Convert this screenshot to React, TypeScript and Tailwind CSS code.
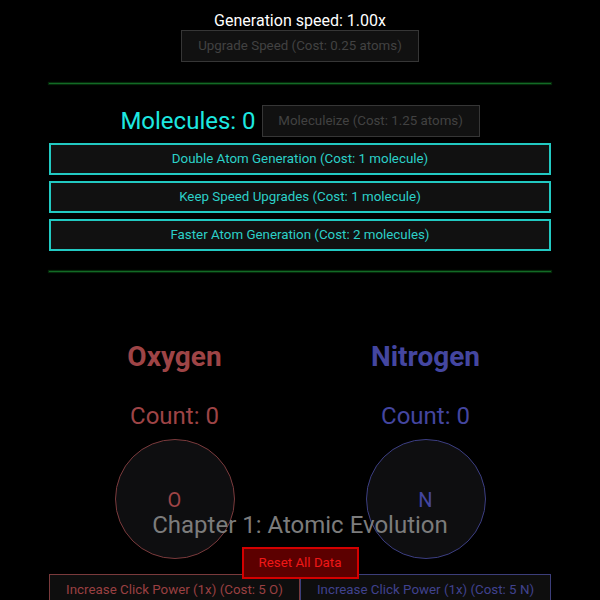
import React from 'react';

const upgrades = [
  'Double Atom Generation (Cost: 1 molecule)',
  'Keep Speed Upgrades (Cost: 1 molecule)',
  'Faster Atom Generation (Cost: 2 molecules)',
];

const elements = [
  {
    name: 'Oxygen',
    symbol: 'O',
    text: 'text-[#9e4446]',
    ring: 'border-[#7a3a3c]',
    btn: 'border-[#7a3a3c] text-[#9a4042]',
  },
  {
    name: 'Nitrogen',
    symbol: 'N',
    text: 'text-[#4446a0]',
    ring: 'border-[#3c3e82]',
    btn: 'border-[#3c3e7a] text-[#40428f]',
  },
];

const App: React.FC = () => {
  return (
    <div className="relative min-h-[600px] bg-black font-['Roboto',sans-serif] overflow-hidden">
      <div className="w-[502px] mx-auto flex flex-col">
        {/* Speed */}
        <div className="pt-[11px] text-center text-white text-[16px] leading-[19px]">
          Generation speed: 1.00x
        </div>
        <div className="flex justify-center">
          <button className="h-[32px] w-[238px] bg-[#111111] border border-[#363636] text-[#424242] text-[13.33px]">
            Upgrade Speed (Cost: 0.25 atoms)
          </button>
        </div>

        <div className="mt-[21px] h-px bg-[#126a26] shadow-[0_0_1px_1px_#062e0c]" />

        {/* Molecules */}
        <div className="mt-[21px] flex items-center justify-center gap-[6px]">
          <h2 className="text-[24px] leading-[32px] text-[#1de8e0]">Molecules: 0</h2>
          <button className="h-[32px] w-[218px] bg-[#111111] border border-[#363636] text-[#424242] text-[13.33px]">
            Moleculeize (Cost: 1.25 atoms)
          </button>
        </div>
        <div className="mt-[6px] flex flex-col gap-[6px]">
          {upgrades.map((u) => (
            <button
              key={u}
              className="h-[32px] w-full bg-[#111111] border-2 border-[#22c9c2] text-[#2cd0c8] text-[13.33px]"
            >
              {u}
            </button>
          ))}
        </div>

        <div className="mt-[20px] h-px bg-[#126a26] shadow-[0_0_1px_1px_#062e0c]" />

        {/* Elements */}
        <div className="mt-[69px] grid grid-cols-2">
          {elements.map((e) => (
            <div key={e.name} className="flex flex-col items-center">
              <h3 className={`text-[28px] leading-[32px] font-bold ${e.text}`}>{e.name}</h3>
              <div className={`mt-[29px] text-[24px] leading-[28px] ${e.text}`}>Count: 0</div>
              <div
                className={`mt-[9px] w-[120px] h-[120px] rounded-full border bg-[#0e0e10] flex items-center justify-center text-[20px] pt-[2px] ${e.ring} ${e.text}`}
              >
                {e.symbol}
              </div>
              <button className={`mt-[15px] h-[32px] w-full bg-[#0e0e0e] border text-[13.33px] ${e.btn}`}>
                Increase Click Power (1x) (Cost: 5 {e.symbol})
              </button>
            </div>
          ))}
        </div>
      </div>

      {/* Overlay */}
      <div className="absolute top-[509px] left-0 right-0 flex flex-col items-center">
        <h1 className="text-[24px] leading-[32px] text-[#7c7c7c]">Chapter 1: Atomic Evolution</h1>
        <button className="mt-[6px] h-[32px] w-[117px] bg-[#5c0000] border-2 border-[#d40000] text-[#f01818] text-[13.33px]">
          Reset All Data
        </button>
      </div>
    </div>
  );
};

export default App;
